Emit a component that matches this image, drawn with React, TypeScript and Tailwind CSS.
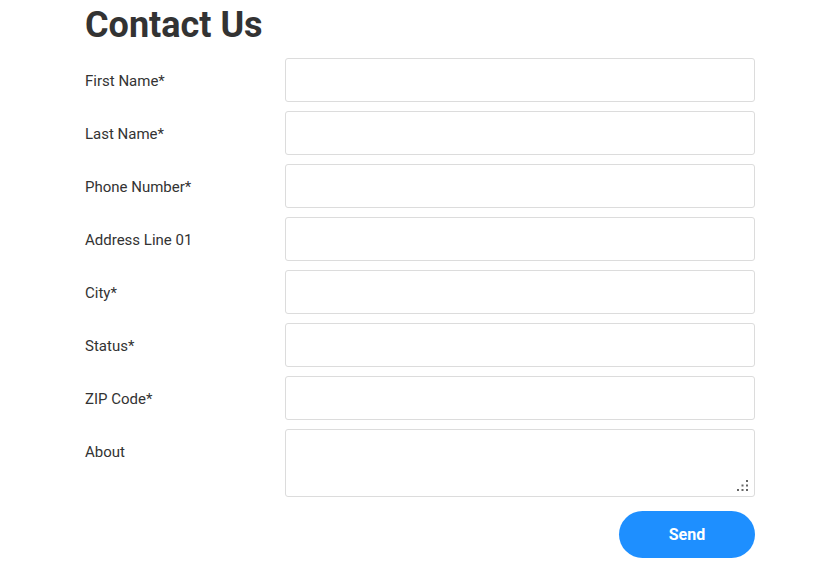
const fields = [
  "First Name*",
  "Last Name*",
  "Phone Number*",
  "Address Line 01",
  "City*",
  "Status*",
  "ZIP Code*",
];

// little dotted grip drawn over the textarea corner
function Grip() {
  const dots = [
    [9, 0],
    [4.5, 4.5],
    [9, 4.5],
    [0, 9],
    [4.5, 9],
    [9, 9],
  ];
  return (
    <svg
      className="pointer-events-none absolute right-[7px] bottom-[6px]"
      width="11"
      height="11"
      viewBox="0 0 11 11"
    >
      {dots.map(([x, y], i) => (
        <rect key={i} x={x} y={y} width="2" height="2" fill="#666" />
      ))}
    </svg>
  );
}

export default function App() {
  return (
    <div className="min-h-screen bg-white pl-[85px] font-['Roboto',sans-serif] text-[#333]">
      <div className="w-[670px]">
        <h1 className="mt-[4px] mb-[11px] text-[36px] font-bold leading-[43px] text-[#333]">
          Contact Us
        </h1>
        <form className="flex flex-col gap-[9px]">
          {fields.map((f) => (
            <div key={f} className="flex items-start">
              <label className="h-[44px] w-[200px] pt-[2px] text-[15px] leading-[42px]">{f}</label>
              <input
                type="text"
                className="h-[44px] w-[470px] rounded-[3px] border border-[#dcdcdc] bg-white px-3 outline-none"
              />
            </div>
          ))}
          <div className="flex items-start">
            <label className="h-[44px] w-[200px] pt-[2px] text-[15px] leading-[42px]">About</label>
            <div className="relative">
              <textarea className="block h-[68px] w-[470px] resize-none rounded-[3px] border border-[#dcdcdc] bg-white px-3 py-2 outline-none" />
              <Grip />
            </div>
          </div>
          <div className="mt-[5px] flex justify-end">
            <button
              type="button"
              className="h-[47px] w-[136px] rounded-full bg-[#1e8fff] text-[16px] font-bold text-white"
            >
              Send
            </button>
          </div>
        </form>
      </div>
    </div>
  );
}
